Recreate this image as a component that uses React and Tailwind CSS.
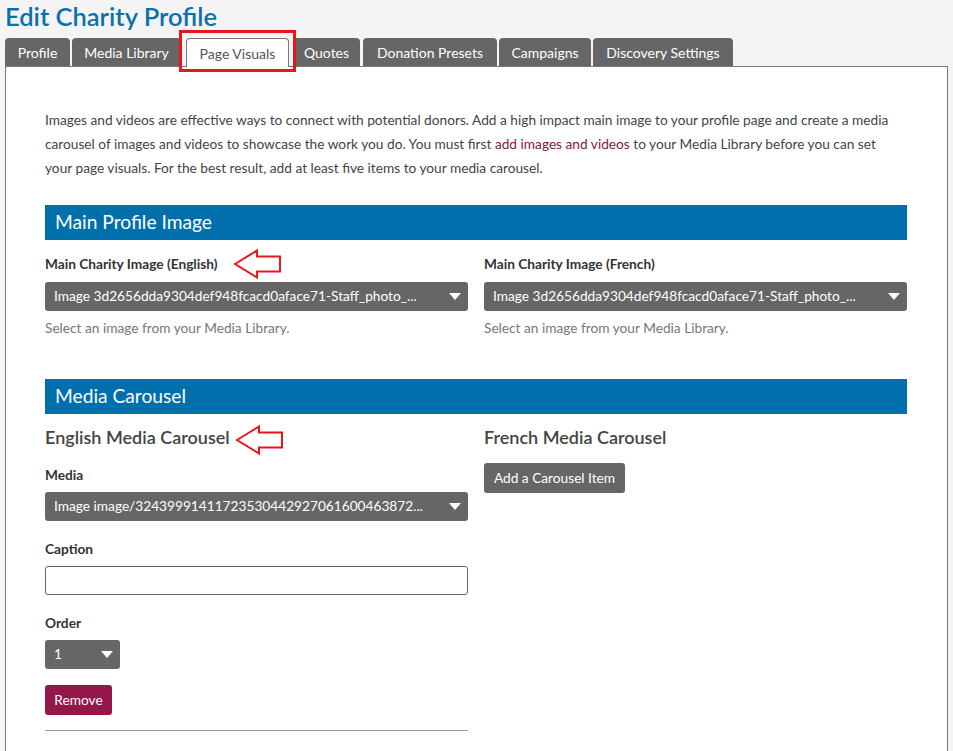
import React from "react";

const font = { fontFamily: "Lato, 'Open Sans', sans-serif" };

function Caret() {
  return (
    <svg width="12" height="8" viewBox="0 0 12 8" className="shrink-0">
      <polygon points="0,0 12,0 6,7" fill="#ffffff" />
    </svg>
  );
}

function Select({ text, className = "" }) {
  return (
    <div
      className={`flex items-center justify-between h-[29px] bg-[#666666] rounded-[3px] pl-[9px] pr-[7px] text-white text-[13.7px] ${className}`}
    >
      <span className="whitespace-nowrap overflow-hidden">{text}</span>
      <Caret />
    </div>
  );
}

function Arrow({ className = "" }) {
  return (
    <svg width="50" height="30" viewBox="0 0 50 30" className={`absolute pointer-events-none ${className}`}>
      <polygon
        points="2,15 24,1.5 24,7.5 47,7.5 47,22.5 24,22.5 24,28.5"
        fill="none"
        stroke="#e8151b"
        strokeWidth="2"
      />
    </svg>
  );
}

function Tab({ label, active, className = "" }) {
  if (active) {
    return (
      <div className={`relative ${className}`}>
        <div className="h-[29px] -mb-px flex items-center justify-center whitespace-nowrap bg-white border border-[#777777] border-b-0 rounded-t-[4px] text-[#555555] text-[14px]">
          {label}
        </div>
        <div className="absolute left-[-7px] right-[-7px] top-[-8px] bottom-[-6px] border-[3px] border-[#e8151b] pointer-events-none" />
      </div>
    );
  }
  return (
    <div
      className={`h-[28px] flex items-center justify-center whitespace-nowrap bg-[#666666] rounded-t-[4px] text-white text-[14px] ${className}`}
    >
      {label}
    </div>
  );
}

export default function App() {
  return (
    <div className="min-h-screen bg-[#f4f4f4] pl-[5px] pr-[5px]" style={font}>
      <h1 className="text-[25.5px] leading-[32px] font-semibold text-[#0a71ae]">
        Edit Charity Profile
      </h1>
      <div className="flex items-end mt-[6px] relative z-10">
        <Tab label="Profile" className="w-[65px]" />
        <Tab label="Media Library" className="ml-[2px] w-[109px]" />
        <Tab label="Page Visuals" active className="ml-[5px] w-[103px]" />
        <Tab label="Quotes" className="ml-[4px] w-[67px]" />
        <Tab label="Donation Presets" className="ml-[3px] w-[134px]" />
        <Tab label="Campaigns" className="ml-[2px] w-[92px]" />
        <Tab label="Discovery Settings" className="ml-[2px] w-[140px]" />
      </div>
      <div className="bg-white border border-[#777777] w-[943px] min-h-[700px] pl-[39px] pr-[40px] pt-[41px]">
        <p className="text-[13.7px] leading-[24px] text-[#444444] pr-[10px]">
          Images and videos are effective ways to connect with potential donors. Add a high impact main image to your
          profile page and create a media carousel of images and videos to showcase the work you do. You must first{" "}
          <span className="text-[#8a1538]">add images and videos</span> to your Media Library before you can set your
          page visuals. For the best result, add at least five items to your media carousel.
        </p>

        <div className="mt-[25px] h-[35px] bg-[#0070ad] flex items-center pl-[10px] text-white text-[19.2px]">
          Main Profile Image
        </div>
        <div className="grid grid-cols-2 gap-[16px]">
          <div className="relative">
            <div className="mt-[14px] flex items-center h-[20px]">
              <span className="text-[13.7px] font-bold text-[#333333]">Main Charity Image (English)</span>
            </div>
            <Arrow className="left-[188px] top-[9px]" />
            <Select
              className="mt-[8px]"
              text="Image 3d2656dda9304def948fcacd0aface71-Staff_photo_..."
            />
            <div className="mt-[7px] text-[13.7px] leading-[20px] text-[#777777]">
              Select an image from your Media Library.
            </div>
          </div>
          <div>
            <div className="mt-[14px] flex items-center h-[20px]">
              <span className="text-[13.7px] font-bold text-[#333333]">Main Charity Image (French)</span>
            </div>
            <Select
              className="mt-[8px]"
              text="Image 3d2656dda9304def948fcacd0aface71-Staff_photo_..."
            />
            <div className="mt-[7px] text-[13.7px] leading-[20px] text-[#777777]">
              Select an image from your Media Library.
            </div>
          </div>
        </div>

        <div className="mt-[41px] h-[35px] bg-[#0070ad] flex items-center pl-[10px] text-white text-[19.2px]">
          Media Carousel
        </div>
        <div className="grid grid-cols-2 gap-[16px]">
          <div className="relative">
            <div className="mt-[11px] flex items-center h-[24px]">
              <span className="text-[18px] text-[#444444] font-semibold">English Media Carousel</span>
            </div>
            <Arrow className="left-[190px] top-[11px]" />
            <div className="mt-[16px] h-[20px] leading-[20px] text-[13.7px] font-bold text-[#333333]">Media</div>
            <Select className="mt-[7px]" text="Image image/32439991411723530442927061600463872..." />
            <div className="mt-[18px] h-[20px] leading-[20px] text-[13.7px] font-bold text-[#333333]">Caption</div>
            <div className="mt-[7px] h-[29px] border border-[#666666] rounded-[3px] bg-white" />
            <div className="mt-[18px] h-[20px] leading-[20px] text-[13.7px] font-bold text-[#333333]">Order</div>
            <Select className="mt-[7px] w-[75px]" text="1" />
            <button className="mt-[16px] h-[30px] w-[67px] rounded-[3px] bg-[#94174a] text-white text-[13.7px] flex items-center justify-center">
              Remove
            </button>
            <div className="mt-[15px] border-t border-[#9a9a9a]" />
          </div>
          <div>
            <div className="mt-[11px] flex items-center h-[24px]">
              <span className="text-[18px] text-[#444444] font-semibold">French Media Carousel</span>
            </div>
            <button className="mt-[14px] h-[30px] w-[141px] rounded-[3px] bg-[#666666] text-white text-[13.7px] flex items-center justify-center">
              Add a Carousel Item
            </button>
          </div>
        </div>
      </div>
    </div>
  );
}
